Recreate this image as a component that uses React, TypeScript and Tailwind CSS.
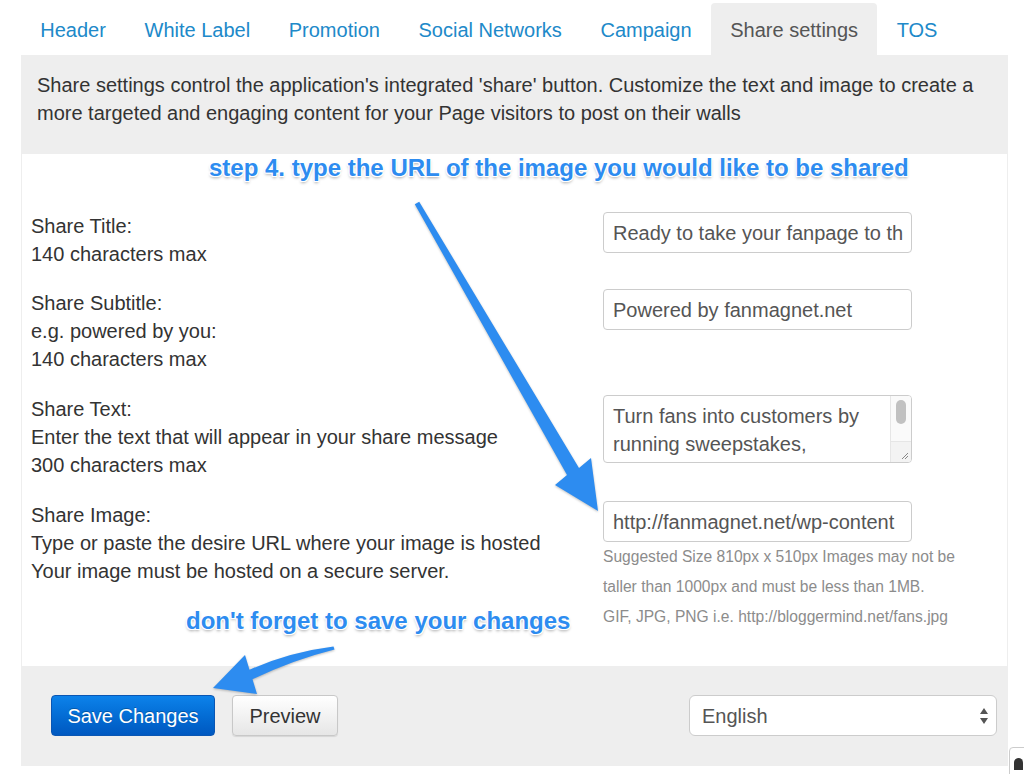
import React from 'react'

const TABS = ['Header', 'White Label', 'Promotion', 'Social Networks', 'Campaign', 'Share settings', 'TOS']
const ACTIVE = 'Share settings'

const NOTE =
  'absolute whitespace-nowrap text-[24px] leading-[28px] font-bold text-[#2d8cf0] [text-shadow:1px_0_0_#fff,-1px_0_0_#fff,0_1px_0_#fff,0_-1px_0_#fff,1px_1px_0_#fff,-1px_-1px_0_#fff,1px_-1px_0_#fff,-1px_1px_0_#fff,0_2px_3px_rgba(0,0,0,0.35)]'

function Field({ value }: { value: string }) {
  return (
    <div className="w-[309px] h-[41px] border border-[#cccccc] rounded-[4px] bg-white pl-[9px] flex items-center whitespace-nowrap text-[20px] text-[#555]">
      {value}
    </div>
  )
}

export default function App() {
  return (
    <div className="relative w-[1024px] h-[774px] overflow-hidden bg-white font-['Liberation_Sans',Arial,sans-serif]">
      <div className="ml-[21px] w-[987px] pt-[3px]">
        {/* Tabs */}
        <ul className="flex">
          {TABS.map((t) => (
            <li
              key={t}
              className={`px-[19.3px] pt-[13px] pb-[11px] text-[20px] leading-[28px] rounded-t-[4px] ${
                t === ACTIVE ? 'bg-[#eeeeee] text-[#555]' : 'text-[#2089c9]'
              }`}
            >
              {t}
            </li>
          ))}
        </ul>

        <div className="bg-[#eeeeee]">
          {/* Description */}
          <p className="px-[16px] pt-[16px] pb-[27px] text-[20px] leading-[28px] text-[#333]">
            Share settings control the application's integrated 'share' button. Customize the text and image to create a
            more targeted and engaging content for your Page visitors to post on their walls
          </p>

          {/* Form */}
          <div className="mx-[1px] bg-white pt-[58px] pb-[34px] pl-[9px] text-[20px] leading-[28px] text-[#333]">
            <div className="flex mb-[21px]">
              <div className="w-[572px]">
                <div>Share Title:</div>
                <div>140 characters max</div>
              </div>
              <Field value="Ready to take your fanpage to th" />
            </div>

            <div className="flex mb-[22px]">
              <div className="w-[572px]">
                <div>Share Subtitle:</div>
                <div>e.g. powered by you:</div>
                <div>140 characters max</div>
              </div>
              <Field value="Powered by fanmagnet.net" />
            </div>

            <div className="flex mb-[22px]">
              <div className="w-[572px]">
                <div>Share Text:</div>
                <div>Enter the text that will appear in your share message</div>
                <div>300 characters max</div>
              </div>
              <div className="w-[309px] h-[68px] border border-[#cccccc] rounded-[4px] bg-white flex overflow-hidden">
                <div className="flex-1 pl-[9px] pt-[6px] text-[#555] leading-[28px]">
                  Turn fans into customers by
                  <br />
                  running sweepstakes,
                </div>
                <div className="w-[21px] border-l border-[#e6e6e6] flex flex-col">
                  <div className="flex-1 bg-[#fafafa] flex justify-center pt-[4px]">
                    <div className="w-[10px] h-[24px] rounded-full bg-[#c1c1c1]" />
                  </div>
                  <div className="h-[21px] bg-[#f3f3f3] border-t border-[#e6e6e6] flex items-end justify-end pr-[2px] pb-[2px]">
                    <svg width="10" height="10" viewBox="0 0 10 10">
                      <path d="M9 3 L3 9 M9 6 L6 9" stroke="#888" strokeWidth="1" />
                    </svg>
                  </div>
                </div>
              </div>
            </div>

            <div className="flex">
              <div className="w-[572px]">
                <div>Share Image:</div>
                <div>Type or paste the desire URL where your image is hosted</div>
                <div>Your image must be hosted on a secure server.</div>
              </div>
              <div>
                <Field value="http://fanmagnet.net/wp-content" />
                <p className="whitespace-nowrap text-[15.6px] leading-[30px] text-[#8c8c8c]">
                  Suggested Size 810px x 510px Images may not be
                  <br />
                  taller than 1000px and must be less than 1MB.
                  <br />
                  GIF, JPG, PNG i.e. http://bloggermind.net/fans.jpg
                </p>
              </div>
            </div>
          </div>

          {/* Footer */}
          <div className="pl-[30px] pr-[11px] pt-[29px] pb-[30px] flex items-center justify-between">
            <div className="flex gap-[17px]">
              <button className="w-[164px] h-[41px] rounded-[4px] border border-[#0a56b3] bg-gradient-to-b from-[#0d82ea] to-[#0058c0] text-white text-[20px] [text-shadow:0_-1px_0_rgba(0,0,0,0.25)]">
                Save Changes
              </button>
              <button className="w-[106px] h-[41px] rounded-[4px] border border-[#c8c8c8] bg-gradient-to-b from-white to-[#e6e6e6] text-[#333] text-[20px] shadow-[0_1px_1px_rgba(0,0,0,0.1)]">
                Preview
              </button>
            </div>
            <div className="w-[308px] h-[41px] rounded-[6px] border border-[#cccccc] bg-white flex items-center justify-between pl-[12px] pr-[7px] text-[20px] text-[#555]">
              <span>English</span>
              <svg width="10" height="18" viewBox="0 0 10 18">
                <path d="M5 1 L9 7 L1 7 Z M1 11 L9 11 L5 17 Z" fill="#555" />
              </svg>
            </div>
          </div>
        </div>
      </div>

      {/* Annotations */}
      <div className={`${NOTE} left-[209px] top-[154px]`}>step 4. type the URL of the image you would like to be shared</div>
      <div className={`${NOTE} left-[186px] top-[607px]`}>don't forget to save your changes</div>

      <svg
        className="absolute left-0 top-0 pointer-events-none [filter:drop-shadow(0_1px_1px_rgba(0,0,0,0.25))]"
        width="1024"
        height="774"
        viewBox="0 0 1024 774"
      >
        <polygon
          points="419.2,201.7 579,468 591,458 598,511 555,485 567,475 414.8,204.3"
          fill="#2d8cf0"
          strokeLinejoin="round"
        />
        <path
          d="M333.5,646.6 Q290,652 249.5,669.7 L245,655 L213,688 L257,694 L252.5,679.3 Q292,660 334.5,649.4 Z"
          fill="#2d8cf0"
        />
      </svg>

      {/* corner widget */}
      <div className="absolute left-[1009px] top-[747px] w-[24px] h-[32px] bg-white border border-[#cccccc] rounded-tl-[4px] flex justify-start pl-[4px] pt-[10px]">
        <div className="w-[9px] h-[12px] rounded-t-full bg-[#333]" />
      </div>
    </div>
  )
}
